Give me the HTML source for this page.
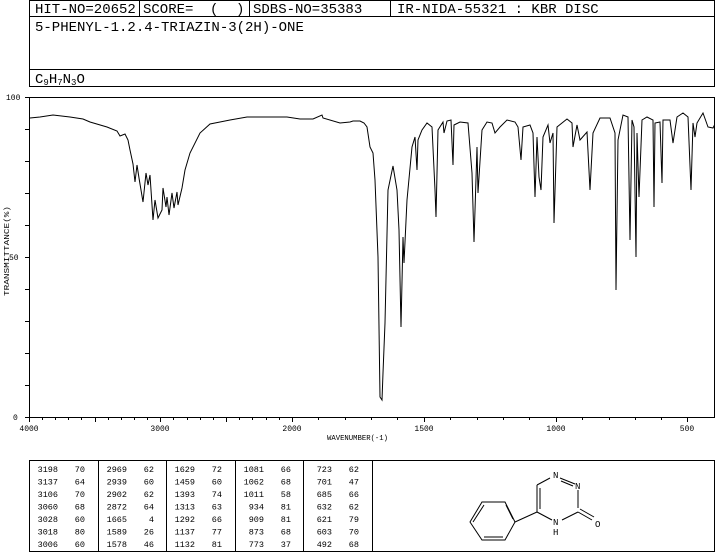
<!DOCTYPE html>
<html><head><meta charset="utf-8"><style>
html,body{margin:0;padding:0;background:#fff;width:715px;height:553px;overflow:hidden}
svg{display:block}
text{font-family:"Liberation Mono",monospace;fill:#000}
</style></head><body>
<svg width="715" height="553" viewBox="0 0 715 553" xmlns="http://www.w3.org/2000/svg">
<g fill="none" stroke="#000" stroke-width="1" shape-rendering="crispEdges">
<rect x="29.5" y="0.5" width="685" height="86"/>
<line x1="29" y1="16.5" x2="715" y2="16.5"/>
<line x1="29" y1="69.5" x2="715" y2="69.5"/>
<line x1="139.5" y1="0" x2="139.5" y2="16"/>
<line x1="249.5" y1="0" x2="249.5" y2="16"/>
<line x1="390.5" y1="0" x2="390.5" y2="16"/>
<line x1="25" y1="97.5" x2="715" y2="97.5"/>
<line x1="29.5" y1="97" x2="29.5" y2="417"/>
<line x1="25" y1="417.5" x2="715" y2="417.5"/>
<line x1="714.5" y1="97" x2="714.5" y2="417"/>
</g>
<g stroke="#000" stroke-width="1" shape-rendering="crispEdges">
<path d="M25 129.5h4M25 161.5h4M25 193.5h4M25 225.5h4M25 257.5h4M25 289.5h4M25 321.5h4M25 353.5h4M25 385.5h4"/>
<path d="M29.5 417v5M42.5 417v3M55.5 417v3M68.5 417v3M81.5 417v3M95.5 417v5M108.5 417v3M121.5 417v3M134.5 417v3M147.5 417v3M160.5 417v5M173.5 417v3M187.5 417v3M200.5 417v3M213.5 417v3M226.5 417v5M239.5 417v3M252.5 417v3M266.5 417v3M279.5 417v3M292.5 417v5M318.5 417v3M345.5 417v3M371.5 417v3M397.5 417v3M424.5 417v5M450.5 417v3M477.5 417v3M503.5 417v3M529.5 417v3M556.5 417v5M582.5 417v3M609.5 417v3M635.5 417v3M661.5 417v3M687.5 417v5"/>
</g>
<g font-size="8">
<text x="6" y="100">100</text>
<text x="9" y="260">50</text>
<text x="13" y="420">0</text>
<text x="29" y="431" text-anchor="middle">4000</text>
<text x="160" y="431" text-anchor="middle">3000</text>
<text x="292" y="431" text-anchor="middle">2000</text>
<text x="424" y="431" text-anchor="middle">1500</text>
<text x="556" y="431" text-anchor="middle">1000</text>
<text x="687" y="431" text-anchor="middle">500</text>
<text x="327" y="440" font-size="7" textLength="61" lengthAdjust="spacingAndGlyphs">WAVENUMBER(-1)</text>
<text transform="translate(9,251) rotate(-90)" font-size="7" text-anchor="middle" textLength="90" lengthAdjust="spacingAndGlyphs">TRANSMITTANCE(%)</text>
</g>
<polyline fill="none" stroke="#000" stroke-width="1" points="30,118 40,117 53,115 70,117 83,119 90,122 107,127 117,131 120,136 125,134 128,140 130,150 133,164 135,182 137,165 139,178 143,202 146,173 148,185 150,175 153,220 155,200 158,218 162,210 163,188 166,207 167,197 169,215 172,193 174,208 177,192 178,205 182,188 185,170 190,153 200,133 210,124 220,122 230,120 247,117 270,117 287,117 300,119 313,119 322,115 323,118 340,123 350,122 353,121 360,121 364,123 367,127 370,147 373,153 375,180 378,257 380,397 382,400 383,373 385,323 388,190 393,166 397,190 399,230 401,327 403,237 404,263 407,200 412,147 415,137 417,170 418,140 422,130 427,123 432,127 435,190 436,217 438,130 443,122 444,133 447,121 451,120 453,165 454,125 460,122 468,123 472,173 474,242 477,147 478,193 482,130 487,122 492,123 495,133 500,127 507,120 515,122 518,127 521,160 523,127 530,125 533,133 535,197 537,137 539,177 541,190 543,137 548,125 550,143 553,133 554,223 557,127 567,119 572,123 573,147 577,125 580,140 587,132 590,190 593,133 600,118 610,118 615,133 616,290 618,140 623,115 628,117 630,240 632,120 634,127 636,257 637,133 639,197 642,120 647,117 653,120 654,207 655,123 660,122 662,183 663,120 670,120 673,143 677,117 683,113 688,117 691,190 693,123 695,137 697,123 703,113 708,127 713,128 715,124"/>
<g font-size="14">
<text x="35" y="13">HIT-NO=20652</text>
<text x="143" y="13">SCORE=</text>
<text x="210" y="13">(</text>
<text x="236" y="13">)</text>
<text x="253" y="13">SDBS-NO=35383</text>
<text x="397" y="13">IR-NIDA-55321 : KBR DISC</text>
<text x="35" y="31">5-PHENYL-1.2.4-TRIAZIN-3(2H)-ONE</text>
<text x="35" y="83">C<tspan font-size="9" dy="2">9</tspan><tspan dy="-2">H</tspan><tspan font-size="9" dy="2">7</tspan><tspan dy="-2">N</tspan><tspan font-size="9" dy="2">3</tspan><tspan dy="-2">O</tspan></text>
</g>
<g fill="none" stroke="#000" stroke-width="1" shape-rendering="crispEdges">
<rect x="29.5" y="460.5" width="685" height="91"/>
<path d="M98.5 460v92M166.5 460v92M235.5 460v92M303.5 460v92M372.5 460v92"/>
</g>
<g font-size="8.5" text-anchor="end">
<g transform="translate(0,472)">
<text x="58" y="0">3198</text><text x="85" y="0">70</text>
<text x="58" y="12.5">3137</text><text x="85" y="12.5">64</text>
<text x="58" y="25">3106</text><text x="85" y="25">70</text>
<text x="58" y="37.5">3060</text><text x="85" y="37.5">68</text>
<text x="58" y="50">3028</text><text x="85" y="50">60</text>
<text x="58" y="62.5">3018</text><text x="85" y="62.5">80</text>
<text x="58" y="75">3006</text><text x="85" y="75">60</text>
</g>
<g transform="translate(69,472)">
<text x="58" y="0">2969</text><text x="85" y="0">62</text>
<text x="58" y="12.5">2939</text><text x="85" y="12.5">60</text>
<text x="58" y="25">2902</text><text x="85" y="25">62</text>
<text x="58" y="37.5">2872</text><text x="85" y="37.5">64</text>
<text x="58" y="50">1665</text><text x="85" y="50">4</text>
<text x="58" y="62.5">1589</text><text x="85" y="62.5">26</text>
<text x="58" y="75">1578</text><text x="85" y="75">46</text>
</g>
<g transform="translate(137,472)">
<text x="58" y="0">1629</text><text x="85" y="0">72</text>
<text x="58" y="12.5">1459</text><text x="85" y="12.5">60</text>
<text x="58" y="25">1393</text><text x="85" y="25">74</text>
<text x="58" y="37.5">1313</text><text x="85" y="37.5">63</text>
<text x="58" y="50">1292</text><text x="85" y="50">66</text>
<text x="58" y="62.5">1137</text><text x="85" y="62.5">77</text>
<text x="58" y="75">1132</text><text x="85" y="75">81</text>
</g>
<g transform="translate(206,472)">
<text x="58" y="0">1081</text><text x="85" y="0">66</text>
<text x="58" y="12.5">1062</text><text x="85" y="12.5">68</text>
<text x="58" y="25">1011</text><text x="85" y="25">58</text>
<text x="58" y="37.5">934</text><text x="85" y="37.5">81</text>
<text x="58" y="50">909</text><text x="85" y="50">81</text>
<text x="58" y="62.5">873</text><text x="85" y="62.5">68</text>
<text x="58" y="75">773</text><text x="85" y="75">37</text>
</g>
<g transform="translate(274,472)">
<text x="58" y="0">723</text><text x="85" y="0">62</text>
<text x="58" y="12.5">701</text><text x="85" y="12.5">47</text>
<text x="58" y="25">685</text><text x="85" y="25">66</text>
<text x="58" y="37.5">632</text><text x="85" y="37.5">62</text>
<text x="58" y="50">621</text><text x="85" y="50">79</text>
<text x="58" y="62.5">603</text><text x="85" y="62.5">70</text>
<text x="58" y="75">492</text><text x="85" y="75">68</text>
</g>
</g>
<g fill="none" stroke="#000" stroke-width="1">
<path d="M482 502L505 502L515 522L505 540L482 540L470 522Z"/>
<path d="M473 522L484 505M484 537L503 537M506 505L513 519"/>
<path d="M515 522L537 512"/>
<path d="M537 512L537 485M540 509L540 488"/>
<path d="M537 485L550 478"/>
<path d="M560 478L575 484M561 481L573 486"/>
<path d="M578 490L578 508"/>
<path d="M578 512L562 520"/>
<path d="M552 520L537 512"/>
<path d="M578 512L592 520M580 509L594 517"/>
</g>
<g font-size="9">
<text x="553" y="478" font-family="Liberation Sans, sans-serif">N</text>
<text x="575" y="489" font-family="Liberation Sans, sans-serif">N</text>
<text x="553" y="525" font-family="Liberation Sans, sans-serif">N</text>
<text x="553" y="535" font-family="Liberation Sans, sans-serif">H</text>
<text x="595" y="527" font-family="Liberation Sans, sans-serif">O</text>
</g>
</svg>
</body></html>
